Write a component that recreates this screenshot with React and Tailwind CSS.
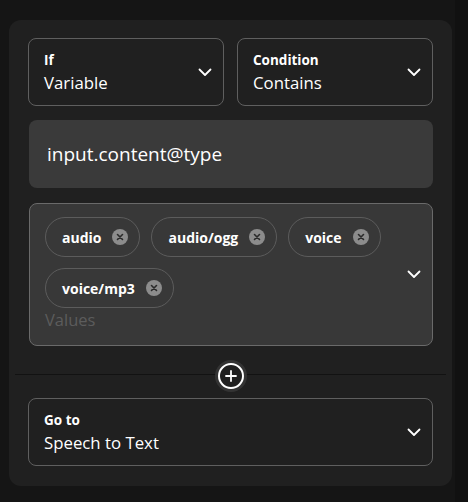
const FONT = { fontFamily: '"Open Sans", "Noto Sans", sans-serif' }

function Chevron() {
  return (
    <svg width="14" height="9" viewBox="0 0 14 9" fill="none" className="shrink-0">
      <path d="M1.5 1.5L7 7L12.5 1.5" stroke="white" strokeWidth="1.8" strokeLinecap="round" strokeLinejoin="round" />
    </svg>
  )
}

function SelectBox({ label, value, className = '' }) {
  return (
    <div className={`flex h-[68px] items-center justify-between rounded-lg border border-[#5f5f5f] pl-[15px] pr-[11px] ${className}`}>
      <div className="flex flex-col">
        <span className="text-[13.5px] font-bold leading-[18px] text-white">{label}</span>
        <span className="mt-[4px] text-[16.8px] leading-[20px] text-white">{value}</span>
      </div>
      <Chevron />
    </div>
  )
}

function Chip({ text }) {
  return (
    <div className="flex h-10 items-center gap-[11px] rounded-full border border-[#5c5c5c] pl-4 pr-[11px]">
      <span className="text-[14px] font-bold text-white">{text}</span>
      <span className="flex h-4 w-4 items-center justify-center rounded-full bg-[#8c8c8c]">
        <svg width="8" height="8" viewBox="0 0 8 8">
          <path d="M1.5 1.5L6.5 6.5M6.5 1.5L1.5 6.5" stroke="#2a2a2a" strokeWidth="1.6" strokeLinecap="round" />
        </svg>
      </span>
    </div>
  )
}

export default function App() {
  return (
    <div className="flex h-[502px] w-[468px] bg-[#151515]" style={FONT}>
      <div className="ml-[9px] mt-5 h-[466px] w-[443px] rounded-xl bg-[#202020] px-[19px] pt-[18px]">
        <div className="flex gap-[13px]">
          <SelectBox label="If" value="Variable" className="w-[196px]" />
          <SelectBox label="Condition" value="Contains" className="flex-1" />
        </div>

        <div className="ml-px mt-[14px] flex h-[68px] items-center rounded-lg bg-[#3a3a3a] px-[18px]">
          <span className="text-[19px] text-white">input.content@type</span>
        </div>

        <div className="ml-px mt-[15px] flex h-[143px] items-center rounded-lg border border-[#6a6a6a] bg-[#383838] pl-[15px] pr-[11px]">
          <div className="flex flex-1 flex-col self-start pt-[13px]">
            <div className="flex w-[345px] flex-wrap gap-[11px]">
              <Chip text="audio" />
              <Chip text="audio/ogg" />
              <Chip text="voice" />
              <Chip text="voice/mp3" />
            </div>
            <span className="text-[16.5px] leading-[24px] text-[#5c5c5c]">Values</span>
          </div>
          <Chevron />
        </div>

        <div className="relative -mx-[13px] mt-[28px] flex items-center justify-center">
          <div className="h-px w-full bg-[#121212]" />
          <div className="absolute top-[-14px] flex h-[32px] w-[32px] items-center justify-center rounded-full bg-[#333]">
            <div className="flex h-[26px] w-[26px] items-center justify-center rounded-full border-2 border-white bg-[#202020]">
              <svg width="12" height="12" viewBox="0 0 12 12">
                <path d="M6 1V11M1 6H11" stroke="white" strokeWidth="1.8" strokeLinecap="round" />
              </svg>
            </div>
          </div>
        </div>

        <SelectBox label="Go to" value="Speech to Text" className="mt-[23px]" />
      </div>
      <div className="ml-[3px] h-full flex-1 bg-[#111111]" />
    </div>
  )
}
